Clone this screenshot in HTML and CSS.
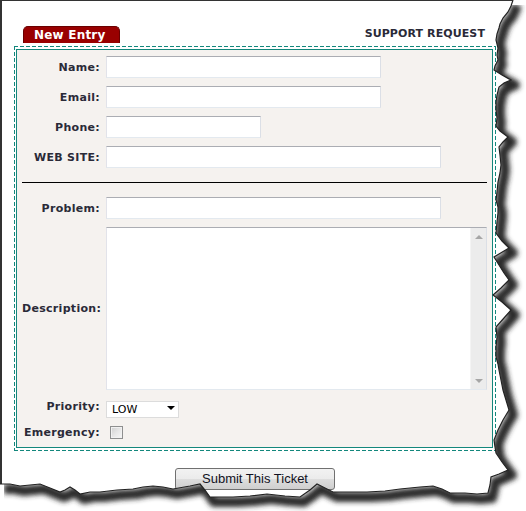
FILE: index.html
```html
<!DOCTYPE html>
<html>
<head>
<meta charset="utf-8">
<title>Support Request</title>
<link rel="stylesheet" href="styles.css">
</head>
<body>
<div class="page">
  <div class="ticket">
    <div class="head">
      <span class="tab">New Entry</span>
      <span class="title">SUPPORT REQUEST</span>
    </div>
    <div class="box">
      <div class="inner">
        <form class="fields">
          <label>Name:</label><input type="text" class="in w275">
          <label>Email:</label><input type="text" class="in w275">
          <label>Phone:</label><input type="text" class="in w155">
          <label>WEB SITE:</label><input type="text" class="in w335">
          <hr class="sep">
          <label>Problem:</label><input type="text" class="in w335">
          <label>Description:</label>
          <div class="desc">
            <textarea></textarea>
            <div class="scroll"><span class="arrow up"></span><span class="arrow down"></span></div>
          </div>
          <label>Priority:</label>
          <div class="select-wrap">
            <select class="select"><option>LOW</option></select>
            <span class="caret"></span>
          </div>
          <label>Emergency:</label><input type="checkbox" class="check">
        </form>
      </div>
    </div>
    <div class="actions"><button type="button" class="submit">Submit This Ticket</button></div>
  </div>
</div>
<svg class="torn" width="526" height="511" viewBox="0 0 526 511" xmlns="http://www.w3.org/2000/svg">
  <defs>
    <clipPath id="outside">
      <polygon points="513,0 511,6 508,12 503,18 500,24 499,28 497,34 496,40 498,48 497,55 498,60 495,66 494,70 502,75 511,80 504,83 499,87 497,95 496,102 496,110 497,118 496,126 500,131 508,137 503,142 499,147 500,155 501,165 500,173 498,182 497,192 496,200 498,207 498,213 497,222 496,233 502,241 509,248 494,257 499,265 504,273 509,280 501,288 493,295 502,302 511,310 504,318 496,327 497,337 496,347 496,357 498,364 499,370 501,380 503,390 506,400 509,410 503,420 498,430 494,440 495,447 496,453 502,462 508,470 499,474 491,477 490,485 488,493 477,494 465,493 450,493 442,489 433,486 420,487 400,489 385,491 367,492 350,492 333,492 325,488 317,484 310,490 300,497 285,496 267,494 250,496 233,497 220,497 210,497 205,490 200,484 190,486 173,489 163,487 153,486 143,487 133,489 117,490 100,492 90,492 80,494 75,490 70,487 65,490 60,492 50,488 40,484 30,485 20,486 10,484 0,484 0,511 526,511 526,0"/>
    </clipPath>
    <filter id="blur" filterUnits="userSpaceOnUse" x="0" y="0" width="526" height="511">
      <feGaussianBlur stdDeviation="2.4"/>
    </filter>
  </defs>
  <polygon fill="#ffffff" points="513,0 511,6 508,12 503,18 500,24 499,28 497,34 496,40 498,48 497,55 498,60 495,66 494,70 502,75 511,80 504,83 499,87 497,95 496,102 496,110 497,118 496,126 500,131 508,137 503,142 499,147 500,155 501,165 500,173 498,182 497,192 496,200 498,207 498,213 497,222 496,233 502,241 509,248 494,257 499,265 504,273 509,280 501,288 493,295 502,302 511,310 504,318 496,327 497,337 496,347 496,357 498,364 499,370 501,380 503,390 506,400 509,410 503,420 498,430 494,440 495,447 496,453 502,462 508,470 499,474 491,477 490,485 488,493 477,494 465,493 450,493 442,489 433,486 420,487 400,489 385,491 367,492 350,492 333,492 325,488 317,484 310,490 300,497 285,496 267,494 250,496 233,497 220,497 210,497 205,490 200,484 190,486 173,489 163,487 153,486 143,487 133,489 117,490 100,492 90,492 80,494 75,490 70,487 65,490 60,492 50,488 40,484 30,485 20,486 10,484 0,484 0,511 526,511 526,0"/>
  <g clip-path="url(#outside)">
    <polyline fill="none" stroke="#2a2a2a" stroke-width="10" stroke-linejoin="round" filter="url(#blur)" transform="translate(4,5)" points="513,0 511,6 508,12 503,18 500,24 499,28 497,34 496,40 498,48 497,55 498,60 495,66 494,70 502,75 511,80 504,83 499,87 497,95 496,102 496,110 497,118 496,126 500,131 508,137 503,142 499,147 500,155 501,165 500,173 498,182 497,192 496,200 498,207 498,213 497,222 496,233 502,241 509,248 494,257 499,265 504,273 509,280 501,288 493,295 502,302 511,310 504,318 496,327 497,337 496,347 496,357 498,364 499,370 501,380 503,390 506,400 509,410 503,420 498,430 494,440 495,447 496,453 502,462 508,470 499,474 491,477 490,485 488,493 477,494 465,493 450,493 442,489 433,486 420,487 400,489 385,491 367,492 350,492 333,492 325,488 317,484 310,490 300,497 285,496 267,494 250,496 233,497 220,497 210,497 205,490 200,484 190,486 173,489 163,487 153,486 143,487 133,489 117,490 100,492 90,492 80,494 75,490 70,487 65,490 60,492 50,488 40,484 30,485 20,486 10,484 0,484"/>
  </g>
  <polyline fill="none" stroke="#222222" stroke-width="1.2" points="513,0 511,6 508,12 503,18 500,24 499,28 497,34 496,40 498,48 497,55 498,60 495,66 494,70 502,75 511,80 504,83 499,87 497,95 496,102 496,110 497,118 496,126 500,131 508,137 503,142 499,147 500,155 501,165 500,173 498,182 497,192 496,200 498,207 498,213 497,222 496,233 502,241 509,248 494,257 499,265 504,273 509,280 501,288 493,295 502,302 511,310 504,318 496,327 497,337 496,347 496,357 498,364 499,370 501,380 503,390 506,400 509,410 503,420 498,430 494,440 495,447 496,453 502,462 508,470 499,474 491,477 490,485 488,493 477,494 465,493 450,493 442,489 433,486 420,487 400,489 385,491 367,492 350,492 333,492 325,488 317,484 310,490 300,497 285,496 267,494 250,496 233,497 220,497 210,497 205,490 200,484 190,486 173,489 163,487 153,486 143,487 133,489 117,490 100,492 90,492 80,494 75,490 70,487 65,490 60,492 50,488 40,484 30,485 20,486 10,484 0,484"/>
</svg>
</body>
</html>
```
FILE: styles.css
```css
html, body {
  margin: 0;
  padding: 0;
  background: #ffffff;
}

body {
  width: 526px;
  height: 511px;
  overflow: hidden;
  position: relative;
  font-family: "DejaVu Sans", Verdana, sans-serif;
}

.page {
  box-sizing: border-box;
  width: 526px;
  height: 511px;
  border-top: 1px solid #333333;
  border-left: 2px solid #333333;
  padding: 25px 0 0 12px;
}

.ticket {
  width: 482px;
}

.head {
  display: flex;
  justify-content: space-between;
  align-items: flex-end;
  height: 17px;
  padding: 0 11px 0 9px;
}

.tab {
  box-sizing: border-box;
  width: 97px;
  height: 17px;
  background: #990000;
  border: 1px solid #6a0000;
  border-bottom: 0;
  border-radius: 5px 5px 0 0;
  color: #ffffff;
  font-weight: bold;
  font-size: 12px;
  line-height: 16px;
  padding-left: 10px;
  letter-spacing: 0.2px;
}

.title {
  font-weight: bold;
  font-size: 11px;
  line-height: 13px;
  color: #2a2a38;
  margin-bottom: 3px;
  letter-spacing: 0.1px;
}

.box {
  margin-top: 3px;
  border: 1px solid transparent;
  padding: 2px 2px 2px 1px;
  background:
    repeating-linear-gradient(90deg, #13877c 0 4px, transparent 4px 6px) left top / 100% 1px no-repeat border-box,
    repeating-linear-gradient(90deg, #13877c 0 4px, transparent 4px 6px) left bottom / 100% 1px no-repeat border-box,
    repeating-linear-gradient(180deg, #13877c 0 4px, transparent 4px 6px) left top / 1px 100% no-repeat border-box,
    repeating-linear-gradient(180deg, #13877c 0 4px, transparent 4px 6px) right top / 1px 100% no-repeat border-box;
}

.inner {
  border: 1px solid #13877c;
  background: #f5f2ef;
  padding: 6px 5px 5px 5px;
}

.fields {
  display: grid;
  grid-template-columns: 78px 1fr;
  column-gap: 6px;
  row-gap: 8px;
  align-items: center;
  margin: 0;
}

.fields label {
  text-align: right;
  font-weight: bold;
  font-size: 11px;
  line-height: 13px;
  letter-spacing: 0.3px;
  color: #2a2a38;
  white-space: nowrap;
}

.in {
  box-sizing: border-box;
  height: 22px;
  margin: 0;
  border: 1px solid;
  border-color: #abadb3 #dbdfe6 #e3e9ef #e2e3ea;
  background: #ffffff;
  padding: 0 3px;
  font-family: "DejaVu Sans", Verdana, sans-serif;
  font-size: 11px;
}

.w275 { width: 275px; }
.w155 { width: 155px; }
.w335 { width: 335px; }

.sep {
  grid-column: 1 / -1;
  border: 0;
  border-top: 1px solid #000000;
  height: 0;
  margin: 6px 0;
}

.desc {
  box-sizing: border-box;
  display: flex;
  width: 381px;
  height: 163px;
  border: 1px solid;
  border-color: #abadb3 #dbdfe6 #e3e9ef #e2e3ea;
  background: #ffffff;
}

.desc textarea {
  flex: 1;
  border: 0;
  margin: 0;
  padding: 2px;
  resize: none;
  outline: none;
  background: #ffffff;
  font-family: "DejaVu Sans", Verdana, sans-serif;
  font-size: 11px;
}

.scroll {
  width: 16px;
  background: #ececec;
  border-left: 1px solid #f4f4f4;
  display: flex;
  flex-direction: column;
  justify-content: space-between;
  align-items: center;
  padding: 7px 0 6px 0;
  box-sizing: border-box;
}

.arrow {
  width: 0;
  height: 0;
  border-left: 4px solid transparent;
  border-right: 4px solid transparent;
}

.arrow.up {
  border-bottom: 4px solid #a6a6a6;
}

.arrow.down {
  border-top: 4px solid #a6a6a6;
}

.select-wrap {
  position: relative;
  width: 73px;
  height: 17px;
}

.select {
  -webkit-appearance: none;
  appearance: none;
  box-sizing: border-box;
  width: 73px;
  height: 17px;
  margin: 0;
  border: 1px solid #dcdcdc;
  border-radius: 0;
  background: #ffffff;
  padding: 0 0 0 5px;
  font-family: "DejaVu Sans", Verdana, sans-serif;
  font-size: 11px;
  line-height: 15px;
  color: #000000;
}

.caret {
  position: absolute;
  right: 4px;
  top: 8px;
  width: 0;
  height: 0;
  border-left: 4px solid transparent;
  border-right: 4px solid transparent;
  border-top: 4px solid #000000;
}

.check {
  -webkit-appearance: none;
  appearance: none;
  box-sizing: border-box;
  width: 13px;
  height: 13px;
  margin: 3px 3px 3px 4px;
  border: 1px solid #8e8f8f;
  background: linear-gradient(135deg, #cfcfcf 0%, #e6e6e6 50%, #f7f7f7 100%);
  box-shadow: inset 0 0 0 1px #f1f1f1;
}

.actions {
  display: flex;
  justify-content: center;
  padding-top: 17px;
}

.submit {
  box-sizing: border-box;
  width: 160px;
  height: 22px;
  margin: 0;
  padding: 0;
  border: 1px solid #707070;
  border-radius: 3px;
  background: linear-gradient(#f2f2f2 0%, #ebebeb 50%, #dddddd 51%, #cfcfcf 100%);
  font-family: "Liberation Sans", Arial, sans-serif;
  font-size: 13px;
  line-height: 20px;
  color: #111122;
}

.torn {
  position: absolute;
  left: 0;
  top: 0;
  pointer-events: none;
}
```
